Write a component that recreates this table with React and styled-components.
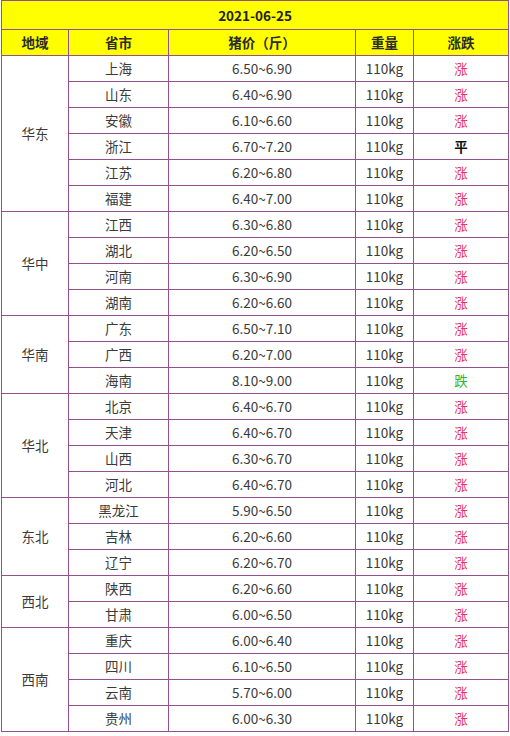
import React from "react";
import styled, { createGlobalStyle } from "styled-components";

const Global = createGlobalStyle`
  html, body { margin: 0; padding: 0; background: #ffffff; }
  body { font-family: "Noto Sans CJK SC", "Noto Sans", sans-serif; }
`;

const Wrap = styled.div`
  padding: 0 0 0 1px;
  width: 507px;
`;

const Table = styled.table`
  border-collapse: collapse;
  width: 507px;
  table-layout: fixed;
  font-size: 13.5px;
  color: #3a3a3a;
  border: 1.5px solid #93508f;
`;

const Cell = styled.td`
  border: 1px solid #93508f;
  text-align: center;
  vertical-align: middle;
  padding: 0;
  height: 25px;
  line-height: 25px;
  background: ${(p) => (p.$yellow ? "#ffff00" : "#ffffff")};
  font-weight: ${(p) => (p.$bold ? 700 : 400)};
  color: ${(p) => p.$color || "#3a3a3a"};
`;

const TitleCell = styled(Cell)`
  height: 28px;
  line-height: 28px;
  font-weight: 700;
  color: #222;
`;

const HeadCell = styled(Cell)`
  font-weight: 700;
  color: #2a2a2a;
`;

const data = [
  ["华东", [
    ["上海", "6.50~6.90", "涨"],
    ["山东", "6.40~6.90", "涨"],
    ["安徽", "6.10~6.60", "涨"],
    ["浙江", "6.70~7.20", "平"],
    ["江苏", "6.20~6.80", "涨"],
    ["福建", "6.40~7.00", "涨"],
  ]],
  ["华中", [
    ["江西", "6.30~6.80", "涨"],
    ["湖北", "6.20~6.50", "涨"],
    ["河南", "6.30~6.90", "涨"],
    ["湖南", "6.20~6.60", "涨"],
  ]],
  ["华南", [
    ["广东", "6.50~7.10", "涨"],
    ["广西", "6.20~7.00", "涨"],
    ["海南", "8.10~9.00", "跌"],
  ]],
  ["华北", [
    ["北京", "6.40~6.70", "涨"],
    ["天津", "6.40~6.70", "涨"],
    ["山西", "6.30~6.70", "涨"],
    ["河北", "6.40~6.70", "涨"],
  ]],
  ["东北", [
    ["黑龙江", "5.90~6.50", "涨"],
    ["吉林", "6.20~6.60", "涨"],
    ["辽宁", "6.20~6.70", "涨"],
  ]],
  ["西北", [
    ["陕西", "6.20~6.60", "涨"],
    ["甘肃", "6.00~6.50", "涨"],
  ]],
  ["西南", [
    ["重庆", "6.00~6.40", "涨"],
    ["四川", "6.10~6.50", "涨"],
    ["云南", "5.70~6.00", "涨"],
    ["贵州", "6.00~6.30", "涨"],
  ]],
];

const trendColor = { 涨: "#e8365d", 跌: "#2fb52f", 平: "#111111" };

export default function App() {
  return (
    <Wrap>
      <Global />
      <Table>
        <colgroup>
          <col style={{ width: 67 }} />
          <col style={{ width: 100 }} />
          <col style={{ width: 187 }} />
          <col style={{ width: 58 }} />
          <col style={{ width: 95 }} />
        </colgroup>
        <tbody>
          <tr>
            <TitleCell colSpan={5} $yellow>2021-06-25</TitleCell>
          </tr>
          <tr>
            <HeadCell $yellow>地域</HeadCell>
            <HeadCell $yellow>省市</HeadCell>
            <HeadCell $yellow>猪价（斤）</HeadCell>
            <HeadCell $yellow>重量</HeadCell>
            <HeadCell $yellow>涨跌</HeadCell>
          </tr>
          {data.map(([region, rows]) =>
            rows.map(([prov, price, trend], i) => (
              <tr key={region + prov}>
                {i === 0 && <Cell rowSpan={rows.length}>{region}</Cell>}
                <Cell>{prov}</Cell>
                <Cell>{price}</Cell>
                <Cell>110kg</Cell>
                <Cell $bold={trend === "平"} $color={trendColor[trend]}>{trend}</Cell>
              </tr>
            ))
          )}
        </tbody>
      </Table>
    </Wrap>
  );
}
